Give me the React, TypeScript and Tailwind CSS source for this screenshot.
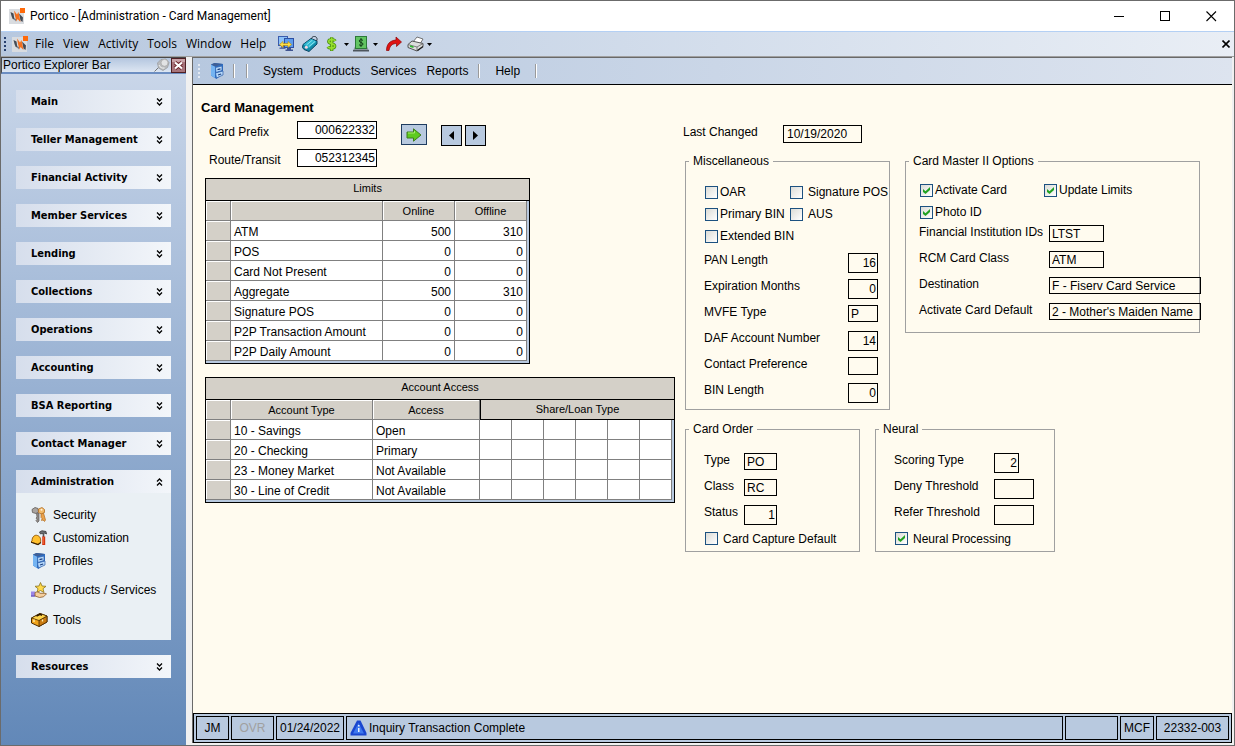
import type { ReactNode } from "react";

type Align = "left" | "right";

const sections = [
  "Main",
  "Teller Management",
  "Financial Activity",
  "Member Services",
  "Lending",
  "Collections",
  "Operations",
  "Accounting",
  "BSA Reporting",
  "Contact Manager",
];

const limits: [string, number, number][] = [
  ["ATM", 500, 310],
  ["POS", 0, 0],
  ["Card Not Present", 0, 0],
  ["Aggregate", 500, 310],
  ["Signature POS", 0, 0],
  ["P2P Transaction Amount", 0, 0],
  ["P2P Daily Amount", 0, 0],
];

const accounts: [string, string][] = [
  ["10 - Savings", "Open"],
  ["20 - Checking", "Primary"],
  ["23 - Money Market", "Not Available"],
  ["30 - Line of Credit", "Not Available"],
];

/* ---------- icons ---------- */

function AppLogo() {
  return (
    <svg width="16" height="16" viewBox="0 0 16 16" aria-hidden="true" className="shrink-0">
      <rect y="1" width="15" height="15" fill="#d9dce0" />
      <path d="M1.500 4 4.500 5.500 5.500 12 3.500 10.500 2.500 8z" fill="#444b55" />
      <path d="M4.500 10 7 11 6.500 13.500z" fill="#6b727c" />
      <path d="M10 5.500 12.500 8 14 9.500 13.500 14 11.500 12.500z" fill="#444b55" />
      <path d="M5 2.500 8 6.500 9.500 4 10.500 9 11.500 14 8.500 11 7.500 13.500 6 8z" fill="#f4701f" />
      <rect x="11" y="0" width="5" height="5" fill="#ff6a0a" />
    </svg>
  );
}

function ComputersIcon() {
  return (
    <svg width="16" height="16" viewBox="0 0 16 16" aria-hidden="true">
      <rect x="0.500" y="0.500" width="9" height="9" fill="#8cc2f8" stroke="#3a5cae" />
      <path d="M3 10h4v1.500H3zM1.500 11.500h6v1.500h-6z" fill="#5b6fa6" />
      <rect x="6.500" y="2.500" width="9" height="9" fill="#5e9cec" stroke="#2d4fa3" />
      <path d="M9 12h4v1.500H9zM7.500 13.500h7.500V15H7.500z" fill="#3f5490" />
      <path d="M1.500 8.500l3.500-3v2h5v-2l3.500 3-3.500 3v-2H5v2z" fill="#ffe14a" stroke="#b98a00" strokeWidth="0.600" />
    </svg>
  );
}

function TagIcon() {
  return (
    <svg width="16" height="16" viewBox="0 0 16 16" aria-hidden="true">
      <path d="M1 8.500 9 2.500l6 2.500v3l-8 7.500-5-2-1.500-2z" fill="#128aa8" stroke="#0a4464" />
      <path d="M1.500 8.500 9 3l5.500 2.500L7 12z" fill="#2fb6cf" />
      <path d="M4.500 9l6-5M7 10.500l6-5" stroke="#8be3ee" />
      <circle cx="4.300" cy="11.300" r="1.500" fill="#f6d6e2" />
      <path d="M9.500 3c0-2.500 3.500-3.500 5-1.500 1 1.500.5 2.500 0 3.500" stroke="#27323c" fill="none" />
    </svg>
  );
}

function DollarIcon() {
  return (
    <svg width="11" height="16" viewBox="0 0 12 16" aria-hidden="true">
      <path
        d="M10 4.800C9 2.800 3 2.200 3 5.200c0 2.700 6.500 2 6.500 5 0 3-6 3-7.500.8M6.200.5v15"
        fill="none"
        stroke="#4c8f12"
        strokeWidth="3.600"
      />
      <path
        d="M10 4.800C9 2.800 3 2.200 3 5.200c0 2.700 6.500 2 6.500 5 0 3-6 3-7.500.8M6.200 1v14"
        fill="none"
        stroke="#96e02c"
        strokeWidth="1.800"
      />
    </svg>
  );
}

function CashIcon() {
  return (
    <svg width="16" height="16" viewBox="0 0 16 16" aria-hidden="true">
      <path d="M2 10.500h12l2 4H0z" fill="#8a949c" />
      <path d="M0 14h16v1.500H0z" fill="#4d555c" />
      <rect x="2.500" y="0.500" width="11" height="12" fill="#62c462" stroke="#2c7a38" />
      <path d="M10 4.500C9 3.300 6.200 3.300 6.200 5c0 1.700 3.800 1.200 3.800 3 0 1.900-3 2-4 .6M8 2v9" fill="none" stroke="#123d18" />
    </svg>
  );
}

function RedoIcon() {
  return (
    <svg width="16" height="16" viewBox="0 0 16 16" aria-hidden="true">
      <path d="M0.500 14.500C.5 8 4 4.500 10 4V1l5.500 5-5 4.500V7.500C6.500 7.500 4 9.500 3 14.500z" fill="#e01212" stroke="#8c0505" strokeWidth="0.700" />
    </svg>
  );
}

function PrinterIcon() {
  return (
    <svg width="17" height="16" viewBox="0 0 17 16" aria-hidden="true">
      <path d="M6 6 10 1l6 2-3 5z" fill="#fff" stroke="#555" strokeWidth="0.800" />
      <path d="M1 8.500 5 5l11 2.500v3L10 15l-9-3.500z" fill="#dcdedc" stroke="#444" strokeWidth="0.900" />
      <path d="M1 8.500 10 11v4M10 11l6-3.500" stroke="#666" strokeWidth="0.800" fill="none" />
      <path d="M3 9.300l3.500 1v1.700l-3.500-1z" fill="#2fb52f" />
      <path d="M10.500 14.500l5.500-4" stroke="#222" strokeWidth="1.400" />
    </svg>
  );
}

function CabinetIcon() {
  return (
    <svg width="16" height="16" viewBox="0 0 16 16" aria-hidden="true" className="shrink-0">
      <path d="M2 1.500 5.500 0 14 1v9.500L7.500 16 2 12.500z" fill="#2f6fc4" />
      <path d="M2 1.500 6 3.500V15L2 12.500z" fill="#74b4f2" />
      <path d="M2 1.500 5.500 0 14 1 6 3.500z" fill="#3f5f96" />
      <path d="M6.500 4.500 13 3v4.500L7 9.500z" fill="#b9dbfb" stroke="#2b5dab" strokeWidth="0.700" />
      <path d="M6.500 10 14 8v4l-6.500 3z" fill="#b9dbfb" stroke="#2b5dab" strokeWidth="0.700" />
      <path d="M8.500 6.700l3-.8M9 12l3.200-1" stroke="#1b3f80" strokeWidth="1.300" />
    </svg>
  );
}

function KeysIcon() {
  return (
    <svg width="16" height="16" viewBox="0 0 16 16" aria-hidden="true" className="shrink-0">
      <path d="M1 2.500 4 .5 7 1.500 7.500 5 5 6.500 1.500 5.500z" fill="#a9a4a0" stroke="#5f5a57" strokeWidth="0.800" />
      <path d="M5.500 6.500 8 6v8l-1.500 1.500-1.500-2 1-1-1-1.500 1-1z" fill="#8f8a86" stroke="#5f5a57" strokeWidth="0.700" />
      <path d="M7.500 2 11 .5l2.500 2v3L10.500 7 7.500 5.500z" fill="#f2b968" stroke="#b06d22" strokeWidth="0.800" />
      <circle cx="10.500" cy="2.800" r="1" fill="#fff3dc" />
      <path d="M10 7l2.500-1 2 7-1 1.500-1.500-1.500-1.500.5.500-2-1-1z" fill="#eaa24c" stroke="#b06d22" strokeWidth="0.700" />
    </svg>
  );
}

function HardHatIcon() {
  return (
    <svg width="16" height="16" viewBox="0 0 16 16" aria-hidden="true" className="shrink-0">
      <path d="M1 11C1 6.500 4 4.500 6.500 5.500c3 1 3.500 4 3 7L7 14.500 0 12z" fill="#ffc02e" stroke="#8a4f00" strokeWidth="0.900" />
      <path d="M0 12.200 7 14.500 10 12.500" fill="none" stroke="#3c2200" strokeWidth="1.200" />
      <path d="M8.500 2 11 .7l4 .8.5 2.500-2-1-1 1-1.500-.5-1.500.5z" fill="#6b6f73" stroke="#2c2c2c" strokeWidth="0.700" />
      <path d="M12.500 3.500V7" stroke="#555" strokeWidth="1.600" />
      <path d="M12.700 6.500V15" stroke="#d5340e" strokeWidth="3" />
      <path d="M12.200 7v7" stroke="#ff8a5c" strokeWidth="0.700" />
    </svg>
  );
}

function StarHandIcon() {
  return (
    <svg width="16" height="16" viewBox="0 0 16 16" aria-hidden="true" className="shrink-0">
      <path d="M9.500 0.500 11 4l4 .3-3 2.400 1 3.800-3.500-2L6 10.500l1-3.800-3-2.400L8 4z" fill="#ffd94a" stroke="#8a7420" strokeWidth="0.800" />
      <path d="M0 9.500h4v5H0z" fill="#9a86e8" />
      <path d="M0 13.500h4v1H0z" fill="#5d48b5" />
      <path d="M4 10.500c2-1 4-.5 5 .8h5l1.500.5-3 3-4 .7L4 14z" fill="#f5cf9d" stroke="#8a5a2a" strokeWidth="0.800" />
    </svg>
  );
}

function ToolboxIcon() {
  return (
    <svg width="17" height="16" viewBox="0 0 17 16" aria-hidden="true" className="shrink-0">
      <path d="M0.500 6 9 1.500l7 2.500v6L8 14.500.5 11z" fill="#f0a41c" stroke="#4a2a00" />
      <path d="M8 8.500 16 4v6l-8 4.500z" fill="#c97a10" stroke="#4a2a00" strokeWidth="0.800" />
      <path d="M0.500 6 9 1.500l7 2.500-8 4.500z" fill="#ffd44a" stroke="#4a2a00" strokeWidth="0.800" />
      <path d="M5.500 4 9 2.300l2 .9" stroke="#2b1800" strokeWidth="1.500" fill="none" />
      <path d="M3 7.500v2.500M11.500 7.500v2" stroke="#fff2b0" strokeWidth="1.300" />
    </svg>
  );
}

function PinIcon() {
  return (
    <svg width="16" height="14" viewBox="0 0 16 14" aria-hidden="true">
      <path d="M0.500 13.500 5 9" stroke="#777" />
      <path d="M3.500 5 7 1.500 12 1l3 3.500-1.500 5L9 12.500 4.500 10z" fill="#b9bbbd" stroke="#9a9c9e" strokeWidth="0.800" />
      <circle cx="10.500" cy="4.800" r="3.500" fill="#e2e3e4" stroke="#a4a4a4" strokeWidth="0.700" />
      <path d="M5 7c1 2.500 3 3.500 5.500 3" stroke="#f4f4f4" fill="none" />
    </svg>
  );
}

function CloseBoxIcon() {
  return (
    <svg width="15" height="15" viewBox="0 0 15 15" aria-hidden="true">
      <rect x="0.500" y="0.500" width="14" height="14" fill="#a8747b" stroke="#4f2024" />
      <path d="M1 1h13v3H1z" fill="#c9a3a8" />
      <path d="M4 4.500l7 6M11 4.500l-7 6" stroke="#6d262c" strokeWidth="4" />
      <path d="M4 4.500l7 6M11 4.500l-7 6" stroke="#fff" strokeWidth="2.200" />
    </svg>
  );
}

function Chevrons({ up = false }: { up?: boolean }) {
  return (
    <svg width="7" height="8" viewBox="0 0 7 8" aria-hidden="true" fill="none" stroke="#000" strokeWidth="1.300">
      {up ? <path d="M1 3.500 3.500 1 6 3.500M1 7.500 3.500 5 6 7.500" /> : <path d="M1 .5 3.500 3 6 .5M1 4.500 3.500 7 6 4.500" />}
    </svg>
  );
}

function Caret() {
  return (
    <svg width="5" height="3" viewBox="0 0 5 3" aria-hidden="true">
      <path d="M0 0h5L2.500 3z" fill="#000" />
    </svg>
  );
}

function GoArrow() {
  return (
    <svg width="16" height="14" viewBox="0 0 16 14" aria-hidden="true">
      <path d="M1 4h6.500V.8L15 7l-7.500 6.200V10H1z" fill="#5ecb1e" stroke="#3d7d1c" />
      <path d="M2 5h6.500V3" stroke="#a8ec6c" fill="none" />
    </svg>
  );
}

function InfoTriangle() {
  return (
    <svg width="17" height="16" viewBox="0 0 17 16" aria-hidden="true" className="shrink-0">
      <path d="M7 0.500h3.500L16.500 13v2.500H.5V13z" fill="#1a46cf" />
      <path d="M8.500 3 14 13.500H3z" fill="#3f78ee" />
      <path d="M8 5h1.500v1.500H8zM8 8h1.500v4H8z" fill="#e8f1ff" />
    </svg>
  );
}

/* ---------- form parts ---------- */

function Check({ label, checked = false, wide = false }: { label: string; checked?: boolean; wide?: boolean }) {
  return (
    <label className={wide ? "flex items-center gap-[5px] whitespace-nowrap" : "flex items-center gap-0.5 whitespace-nowrap"}>
      <span className="grid size-[13px] shrink-0 place-items-center">
        <input
          type="checkbox"
          defaultChecked={checked}
          className="peer col-start-1 row-start-1 size-[13px] appearance-none border border-[#1c5180] bg-linear-to-br from-[#dcdcd7] to-white"
        />
        <svg
          width="7"
          height="7"
          viewBox="0 0 7 7"
          aria-hidden="true"
          className="pointer-events-none invisible col-start-1 row-start-1 peer-checked:visible"
        >
          <path d="M0 2 2.500 4.300 7 0V3L2.500 7 0 5z" fill="#21a121" />
        </svg>
      </span>
      {label}
    </label>
  );
}

const box = "block shrink-0 border border-black bg-transparent outline-none";

function Field({
  id,
  label,
  value = "",
  size,
  align = "left",
}: {
  id: string;
  label: string;
  value?: string;
  size: string;
  align?: Align;
}) {
  return (
    <div className="flex h-[26px] items-start justify-between">
      <label htmlFor={id} className="leading-[14px] whitespace-nowrap">
        {label}
      </label>
      <input
        id={id}
        defaultValue={value}
        className={`${box} ${size} ${align === "right" ? "pr-px text-right" : "pl-0.5"}`}
      />
    </div>
  );
}

function Group({ title, className, children }: { title: string; className: string; children: ReactNode }) {
  return (
    <fieldset className={`min-w-0 shrink-0 border border-[#a0a0a0] pl-[3px] ${className}`}>
      <legend className="px-1 leading-4">{title}</legend>
      {children}
    </fieldset>
  );
}

function StatusCell({ className, children }: { className: string; children?: ReactNode }) {
  return <div className={`flex h-6 items-center border border-black ${className}`}>{children}</div>;
}

function Divider({ className = "" }: { className?: string }) {
  return <span className={`h-[14px] border-r border-l border-r-white border-l-[#9a9a9a] ${className}`} />;
}

const head =
  "h-5 border-r border-b border-[#808080] bg-[#d4d0c8] p-0 text-center text-[11px] font-normal shadow-[inset_1px_1px_0_#ffffff]";
const caption = "h-[22px] border-b border-black bg-[#d4d0c8] p-0 pb-1 text-[11px] font-normal";
const cell = "h-5 border-r border-b border-[#808080] bg-white p-0 px-[3px] pt-0.5 leading-4";

/* ---------- panels ---------- */

function SectionHeader({ title, open = false }: { title: string; open?: boolean }) {
  return (
    <button
      type="button"
      className="flex h-[23px] w-full items-center justify-between bg-linear-to-r from-[#d6deec] to-[#f3f6fa] pr-2 pl-[15px] text-left font-['DejaVu_Sans_Condensed','DejaVu_Sans',sans-serif] text-[11px] font-bold"
    >
      {title}
      <Chevrons up={open} />
    </button>
  );
}

function NavLink({ icon, label, className }: { icon: ReactNode; label: string; className: string }) {
  return (
    <li className={className}>
      <a href="#" className="flex h-full items-center gap-1.5">
        <span className="flex w-4">{icon}</span>
        {label}
      </a>
    </li>
  );
}

function Sidebar() {
  return (
    <aside className="flex w-[185px] shrink-0 flex-col">
      <div className="flex h-[17px] items-center justify-between border-t border-l border-b-2 border-[#4a4a4a] border-b-[#6c8ec2] bg-linear-to-b from-[#b4c6df] to-[#dde6f2] pl-px">
        <h2>Portico Explorer Bar</h2>
        <div className="flex items-center gap-px">
          <button type="button" aria-label="Pin">
            <PinIcon />
          </button>
          <button type="button" aria-label="Close explorer bar">
            <CloseBoxIcon />
          </button>
        </div>
      </div>
      <nav className="flex flex-1 flex-col gap-[15px] bg-linear-to-b from-[#c9d6e9] to-[#6288b8] px-[15px] pt-4 pb-4">
        {sections.map((s) => (
          <SectionHeader key={s} title={s} />
        ))}
        <div className="bg-[#eaf0f4]">
          <SectionHeader title="Administration" open />
          <div className="pt-2.5 pb-[5px] pl-[15px]">
            <ul>
              <NavLink className="h-[23px]" icon={<KeysIcon />} label="Security" />
              <NavLink className="h-[23px]" icon={<HardHatIcon />} label="Customization" />
              <NavLink className="h-[23px]" icon={<CabinetIcon />} label="Profiles" />
            </ul>
            <ul className="mt-[3px]">
              <NavLink className="h-[30px]" icon={<StarHandIcon />} label="Products / Services" />
              <NavLink className="h-[30px]" icon={<ToolboxIcon />} label="Tools" />
            </ul>
          </div>
        </div>
        <SectionHeader title="Resources" />
      </nav>
    </aside>
  );
}

function LimitsTable() {
  return (
    <table className="w-[325px] table-fixed border-separate border-spacing-0 border border-black bg-[#b8c9df]">
      <colgroup>
        <col className="w-[25px]" />
        <col className="w-[152px]" />
        <col className="w-[72px]" />
        <col className="w-[72px]" />
        <col className="w-[2px]" />
      </colgroup>
      <thead>
        <tr>
          <th colSpan={5} className={caption}>
            Limits
          </th>
        </tr>
        <tr>
          <th className={head} />
          <th className={head} />
          <th className={head}>Online</th>
          <th className={head}>Offline</th>
          <th className="p-0" />
        </tr>
      </thead>
      <tbody>
        {limits.map(([name, online, offline]) => (
          <tr key={name}>
            <th className={head} />
            <td className={cell}>{name}</td>
            <td className={`${cell} text-right`}>{online}</td>
            <td className={`${cell} text-right`}>{offline}</td>
            <td className="p-0" />
          </tr>
        ))}
        <tr>
          <td colSpan={5} className="h-[2px] p-0" />
        </tr>
      </tbody>
    </table>
  );
}

function AccessTable() {
  const slots = [1, 2, 3, 4, 5, 6];
  return (
    <table className="w-[470px] table-fixed border-separate border-spacing-0 border border-black bg-[#b8c9df]">
      <colgroup>
        <col className="w-[25px]" />
        <col className="w-[142px]" />
        <col className="w-[107px]" />
        {slots.map((n) => (
          <col key={n} className="w-[32px]" />
        ))}
        <col className="w-[2px]" />
      </colgroup>
      <thead>
        <tr>
          <th colSpan={10} className={caption}>
            Account Access
          </th>
        </tr>
        <tr>
          <th className={head} />
          <th className={head}>Account Type</th>
          <th className={head}>Access</th>
          <th colSpan={7} className="h-5 border-b border-l border-black bg-[#d4d0c8] p-0 pb-0.5 text-[11px] font-normal">
            Share/Loan Type
          </th>
        </tr>
      </thead>
      <tbody>
        {accounts.map(([type, access]) => (
          <tr key={type}>
            <th className={head} />
            <td className={cell}>{type}</td>
            <td className={cell}>{access}</td>
            {slots.map((n) => (
              <td key={n} className={cell} />
            ))}
            <td className="p-0" />
          </tr>
        ))}
        <tr>
          <td colSpan={10} className="h-[2px] p-0" />
        </tr>
      </tbody>
    </table>
  );
}

function LeftColumn() {
  return (
    <section className="w-[474px] shrink-0">
      <h1 className="h-[26px] text-[13px] leading-[26px] font-bold">Card Management</h1>
      <div className="flex items-start pl-2">
        <div className="grid grid-cols-[88px_80px] gap-y-2.5">
          <label htmlFor="prefix" className="self-end leading-[14px]">
            Card Prefix
          </label>
          <input id="prefix" defaultValue="000622332" className="h-[18px] w-full border border-black bg-white pr-px text-right outline-none" />
          <label htmlFor="route" className="self-end leading-[14px]">
            Route/Transit
          </label>
          <input id="route" defaultValue="052312345" className="h-[18px] w-full border border-black bg-white pr-px text-right outline-none" />
        </div>
        <button type="button" aria-label="Go" className="mt-[3px] ml-6 flex h-[21px] w-[26px] items-center justify-center border border-[#1f3c5f] bg-[#b8c9df]">
          <GoArrow />
        </button>
        <div className="mt-1 ml-3.5 flex gap-[3px]">
          <button type="button" aria-label="Previous" className="flex size-[21px] items-center justify-center border border-black bg-[#b8c9df]">
            <svg width="5" height="9" viewBox="0 0 5 9" aria-hidden="true">
              <path d="M5 0v9L0 4.500z" />
            </svg>
          </button>
          <button type="button" aria-label="Next" className="flex size-[21px] items-center justify-center border border-black bg-[#b8c9df]">
            <svg width="5" height="9" viewBox="0 0 5 9" aria-hidden="true">
              <path d="M0 0v9L5 4.500z" />
            </svg>
          </button>
        </div>
      </div>
      <div className="mt-[11px] flex flex-col gap-[13px] pl-1">
        <LimitsTable />
        <AccessTable />
      </div>
    </section>
  );
}

function RightColumn() {
  return (
    <section className="min-w-0 flex-1 pt-[30px] pl-2">
      <div className="flex items-start">
        <label htmlFor="changed" className="w-[100px] leading-[14px]">
          Last Changed
        </label>
        <input id="changed" defaultValue="10/19/2020" className={`${box} h-[18px] w-[79px] pl-[3px]`} />
      </div>
      <div className="mt-2.5 flex items-start gap-[15px] pl-0.5">
        <Group title="Miscellaneous" className="w-[205px]">
          <div className="grid auto-rows-[22px] grid-cols-[85px_1fr] pt-3 pl-4">
            <Check label="OAR" />
            <Check label="Signature POS" wide />
            <Check label="Primary BIN" />
            <Check label="AUS" wide />
            <Check label="Extended BIN" />
          </div>
          <div className="mt-1.5 pr-[11px] pl-[15px]">
            <Field id="pan" label="PAN Length" value="16" size="h-5 w-[30px]" align="right" />
            <Field id="exp" label="Expiration Months" value="0" size="h-5 w-[30px]" align="right" />
            <Field id="mvfe" label="MVFE Type" value="P" size="h-[17px] w-[30px]" />
            <Field id="daf" label="DAF Account Number" value="14" size="h-5 w-[30px]" align="right" />
            <Field id="contact" label="Contact Preference" size="h-[18px] w-[30px]" />
            <Field id="bin" label="BIN Length" value="0" size="h-5 w-[30px]" align="right" />
          </div>
        </Group>
        <Group title="Card Master II Options" className="w-[295px] pb-[3px]">
          <div className="grid auto-rows-[22px] grid-cols-[124px_1fr] pt-2.5 pl-[11px]">
            <Check label="Activate Card" checked />
            <Check label="Update Limits" checked />
            <Check label="Photo ID" checked />
          </div>
          <div className="mt-0.5 grid auto-rows-[26px] grid-cols-[130px_152px] items-start pl-2.5">
            <label htmlFor="fi" className="leading-[14px] whitespace-nowrap">
              Financial Institution IDs
            </label>
            <input id="fi" defaultValue="LTST" className={`${box} h-[17px] w-[55px] pl-0.5`} />
            <label htmlFor="rcm" className="leading-[14px]">
              RCM Card Class
            </label>
            <input id="rcm" defaultValue="ATM" className={`${box} h-[17px] w-[55px] pl-0.5`} />
            <label htmlFor="dest" className="leading-[14px]">
              Destination
            </label>
            <input id="dest" defaultValue="F - Fiserv Card Service" className={`${box} h-[17px] w-[152px] pl-0.5`} />
            <label htmlFor="def" className="leading-[14px]">
              Activate Card Default
            </label>
            <input id="def" defaultValue="2 - Mother's Maiden Name" className={`${box} h-[17px] w-[152px] pl-0.5`} />
          </div>
        </Group>
      </div>
      <div className="mt-[11px] flex items-start gap-[15px] pl-0.5">
        <Group title="Card Order" className="w-[175px] pb-[5px]">
          <div className="w-[88px] pt-4 pl-[15px]">
            <Field id="type" label="Type" value="PO" size="h-[17px] w-[33px]" />
            <Field id="class" label="Class" value="RC" size="h-[17px] w-[33px]" />
            <Field id="status" label="Status" value="1" size="h-5 w-[33px]" align="right" />
          </div>
          <div className="flex h-[15px] pl-4">
            <Check label="Card Capture Default" wide />
          </div>
        </Group>
        <Group title="Neural" className="w-[180px] pb-[5px]">
          <div className="grid auto-rows-[26px] grid-cols-[100px_40px] items-start pt-4 pl-[15px]">
            <label htmlFor="score" className="leading-[14px]">
              Scoring Type
            </label>
            <input id="score" defaultValue="2" className={`${box} h-5 w-[25px] pr-px text-right`} />
            <label htmlFor="deny" className="leading-[14px]">
              Deny Threshold
            </label>
            <input id="deny" className={`${box} h-5 w-10`} />
            <label htmlFor="refer" className="leading-[14px]">
              Refer Threshold
            </label>
            <input id="refer" className={`${box} h-5 w-10`} />
          </div>
          <div className="flex h-[15px] pl-4">
            <Check label="Neural Processing" checked wide />
          </div>
        </Group>
      </div>
    </section>
  );
}

export default function App() {
  return (
    <div className="flex min-h-screen flex-col border border-[#6b6b6b] bg-[#f0f0f0] font-['Liberation_Sans',Arial,sans-serif] text-[12px] leading-4 text-black">
      <header className="flex h-[30px] items-center justify-between bg-white pl-2">
        <div className="flex items-center gap-[5px]">
          <AppLogo />
          <span className="font-[Roboto,sans-serif] text-[12px]">Portico - [Administration - Card Management]</span>
        </div>
        <div className="flex items-center">
          <button type="button" aria-label="Minimize" className="flex w-[46px] justify-center">
            <svg width="11" height="11" viewBox="0 0 11 11" aria-hidden="true">
              <path d="M0 5.500h10" stroke="#000" />
            </svg>
          </button>
          <button type="button" aria-label="Maximize" className="flex w-[46px] justify-center">
            <svg width="11" height="11" viewBox="0 0 11 11" aria-hidden="true">
              <rect x="0.500" y="0.500" width="9" height="9" fill="none" stroke="#000" />
            </svg>
          </button>
          <button type="button" aria-label="Close" className="flex w-[46px] justify-center">
            <svg width="11" height="11" viewBox="0 0 11 11" aria-hidden="true">
              <path d="M.5.5l9.500 9.500M10 .5l-9.500 9.500" stroke="#000" strokeWidth="1.100" />
            </svg>
          </button>
        </div>
      </header>

      <div className="flex h-[26px] items-center border-t border-b border-t-[#b4d0f4] border-b-[#a0a0a0] bg-linear-to-r from-[#b7c8df] to-[#e9eef5] pl-[3px] font-['Open_Sans',sans-serif] text-[12px]">
        <span className="mr-1.5 h-[14px] border-l-2 border-dotted border-[#27406f]" />
        <AppLogo />
        <nav className="flex items-center gap-[9px] pl-[7px]">
          <button type="button">File</button>
          <button type="button">View</button>
          <button type="button">Activity</button>
          <button type="button">Tools</button>
          <button type="button">Window</button>
          <button type="button">Help</button>
        </nav>
        <div className="flex items-center gap-2 pl-3">
          <button type="button" aria-label="Connections">
            <ComputersIcon />
          </button>
          <button type="button" aria-label="Tags">
            <TagIcon />
          </button>
          <div className="flex items-center gap-1">
            <button type="button" aria-label="Money" className="flex items-center gap-[7px]">
              <DollarIcon />
              <Caret />
            </button>
            <button type="button" aria-label="Cash" className="flex items-center gap-1">
              <CashIcon />
              <Caret />
            </button>
          </div>
          <div className="flex items-center gap-[5px]">
            <button type="button" aria-label="Forward">
              <RedoIcon />
            </button>
            <button type="button" aria-label="Print" className="flex items-center gap-[3px]">
              <PrinterIcon />
              <Caret />
            </button>
          </div>
        </div>
        <button type="button" aria-label="Close child window" className="mr-1 ml-auto">
          <svg width="8" height="8" viewBox="0 0 8 8" aria-hidden="true">
            <path d="M.5.5l7 7M7.500.5l-7 7" stroke="#000" strokeWidth="1.600" />
          </svg>
        </button>
      </div>

      <div className="flex flex-1">
        <Sidebar />
        <div className="ml-1.5 flex min-w-0 flex-1 flex-col pr-0.5 pb-0.5">
          <main className="flex flex-1 flex-col border-t border-l border-[#696969] bg-[#fffbef]">
            <div className="flex h-[27px] items-center border-b border-black bg-linear-to-r from-[#b7c8df] to-[#dde4ef] pl-[5px]">
              <span className="h-[14px] border-l-2 border-dotted border-[#e4eaf3]" />
              <button type="button" aria-label="Profiles" className="pl-[9px]">
                <CabinetIcon />
              </button>
              <Divider className="ml-2" />
              <Divider className="ml-[11px]" />
              <nav className="flex items-center gap-2.5 pl-[15px]">
                <button type="button">System</button>
                <button type="button">Products</button>
                <button type="button">Services</button>
                <button type="button">Reports</button>
                <Divider />
                <button type="button" className="px-[5px]">
                  Help
                </button>
                <Divider />
              </nav>
            </div>
            <div className="flex flex-1 items-start pt-2.5 pl-2">
              <LeftColumn />
              <RightColumn />
            </div>
            <footer className="flex items-center gap-0.5 border border-black bg-[#b8c9df] p-0.5">
              <StatusCell className="w-[33px] justify-center">JM</StatusCell>
              <StatusCell className="w-[43px] justify-center text-[#a0a0a0]">OVR</StatusCell>
              <StatusCell className="w-[68px] justify-center">01/24/2022</StatusCell>
              <StatusCell className="min-w-0 flex-1 gap-0.5 pl-[3px]">
                <InfoTriangle />
                Inquiry Transaction Complete
              </StatusCell>
              <StatusCell className="w-[53px]" />
              <StatusCell className="w-[34px] justify-center">MCF</StatusCell>
              <StatusCell className="w-[73px] justify-center">22332-003</StatusCell>
            </footer>
          </main>
        </div>
      </div>
    </div>
  );
}
